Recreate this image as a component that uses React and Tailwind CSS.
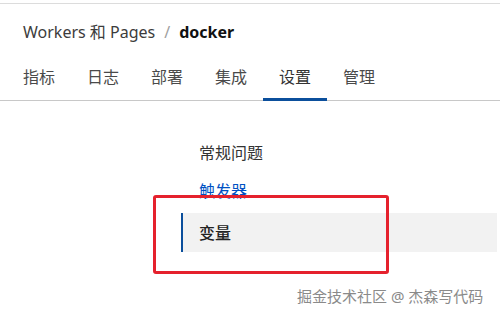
const tabs = ["指标", "日志", "部署", "集成", "设置", "管理"];

function App() {
  const font = { fontFamily: '"Noto Sans", "Noto Sans CJK SC", sans-serif' };

  return (
    <div
      className="relative w-[500px] h-[314px] overflow-hidden bg-white text-[#333]"
      style={font}
    >
      <div className="mt-[3px] border-t border-[#dcdcdc]" />

      {/* breadcrumb */}
      <div className="flex items-center h-[56px] pl-[23px] text-[16px]">
        <span className="text-[#3c3c3c]">Workers 和 Pages</span>
        <span className="mx-[9px] text-[#a0a0a0]">/</span>
        <span className="font-bold text-[#111]">docker</span>
      </div>

      {/* tabs */}
      <div className="flex h-[41px] border-b border-[#c8c8c8] pl-[7px]">
        {tabs.map((t) => (
          <div
            key={t}
            className={
              t === "设置"
                ? "w-[64px] flex justify-center pt-[5px] text-[16px] text-[#333] border-b-[3px] border-[#0b4f9c] -mb-[1px]"
                : "w-[64px] flex justify-center pt-[5px] text-[16px] text-[#4a4a4a]"
            }
          >
            {t}
          </div>
        ))}
      </div>

      {/* side nav */}
      <div className="ml-[181px] mt-[32px] flex flex-col">
        <div className="pl-[18px] h-[39px] flex items-center text-[16px] text-[#333]">
          常规问题
        </div>
        <div className="pl-[18px] h-[37px] flex items-center text-[16px] text-[#0051c3]">
          触发器
        </div>
        <div className="mt-[4px] h-[39px] flex items-center pl-[16px] text-[16px] font-medium text-[#222] bg-[#f2f2f2] border-l-2 border-[#0b4f9c] mr-[3px]">
          变量
        </div>
      </div>

      {/* annotation box */}
      <div className="absolute left-[153px] top-[195px] w-[236px] h-[79px] border-[3px] border-[#e5212d] rounded-[3px]" />

      {/* watermark */}
      <div
        className="absolute left-[297px] top-[285px] text-[15px] text-[#8a8a8a] whitespace-nowrap"
        style={{ textShadow: "0 0 2px #fff" }}
      >
        掘金技术社区 @ 杰森写代码
      </div>
    </div>
  );
}

export default App;
